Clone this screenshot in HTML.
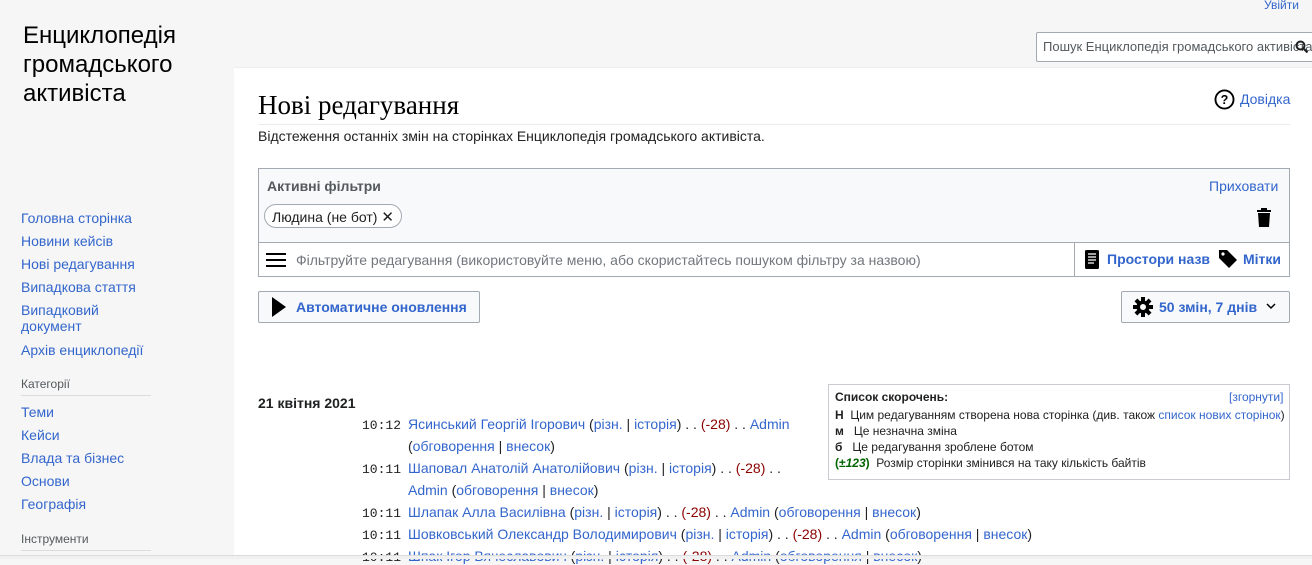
<!DOCTYPE html>
<html><head><meta charset="utf-8"><style>
*{margin:0;padding:0;box-sizing:border-box}
body{width:1312px;height:559px;overflow:hidden;background:#f6f6f6;font-family:"Liberation Sans",sans-serif;color:#202122;position:relative}
a{color:#3366cc;text-decoration:none}
.abs{position:absolute;white-space:nowrap}
.side a{position:absolute;left:21px;font-size:14px;color:#3366cc}
.cat{position:absolute;left:21px;font-size:12px;color:#54595d}
.hr{position:absolute;left:21px;width:130px;height:1px;background:#dcdcdc}
#content{position:absolute;left:234px;top:67px;width:1078px;height:488px;background:#fff;border-top:1px solid #eee}
.mono{font-family:"Liberation Mono",monospace;font-size:13px;color:#202122;display:inline-block;width:46px}
.row{position:absolute;left:362px;font-size:14px;white-space:nowrap}
.red{color:#8b0000}
</style></head><body>
<div class="abs" style="left:23px;top:21px;font-size:24px;line-height:29px;color:#000">Енциклопедія<br>громадського<br>активіста</div>
<a class="abs" style="left:1264px;top:-2px;font-size:12px">Увійти</a>
<div class="abs" style="left:1036px;top:32px;width:290px;height:30px;border:1px solid #a2a9b1;border-radius:2px;background:#fff;font-size:13px;color:#54595d;padding:6px 6px">Пошук Енциклопедія громадського активіста</div>
<svg class="abs" style="left:1295px;top:40px" width="14" height="14" viewBox="0 0 14 14"><circle cx="5.5" cy="5.5" r="4" fill="none" stroke="#202122" stroke-width="2"/><path d="M8.5 8.5l4 4" stroke="#202122" stroke-width="2.2"/></svg>

<div class="side">
<a style="top:210px">Головна сторінка</a>
<a style="top:233px">Новини кейсів</a>
<a style="top:256px">Нові редагування</a>
<a style="top:279px">Випадкова стаття</a>
<a style="top:302px;line-height:16px">Випадковий<br>документ</a>
<a style="top:342px">Архів енциклопедії</a>
<div class="cat" style="top:377px">Категорії</div>
<div class="hr" style="top:395px"></div>
<a style="top:404px">Теми</a>
<a style="top:427px">Кейси</a>
<a style="top:450px">Влада та бізнес</a>
<a style="top:473px">Основи</a>
<a style="top:496px">Географія</a>
<div class="cat" style="top:532px">Інструменти</div>
<div class="hr" style="top:550px"></div>
</div>

<div id="content"></div>
<div class="abs" style="left:258px;top:90px;font-family:'Liberation Serif',serif;font-size:27px;color:#000">Нові редагування</div>
<div class="abs" style="left:258px;top:124px;width:1032px;height:1px;background:#eaecf0"></div>
<svg class="abs" style="left:1214px;top:89px" width="21" height="21" viewBox="0 0 20 20"><circle cx="10" cy="10" r="8.6" fill="none" stroke="#000" stroke-width="1.8"/><text x="10" y="14.5" font-size="12" font-weight="bold" text-anchor="middle" font-family="Liberation Sans" fill="#000">?</text></svg>
<a class="abs" style="left:1240px;top:91px;font-size:14px">Довідка</a>
<div class="abs" style="left:258px;top:128px;font-size:14px">Відстеження останніх змін на сторінках Енциклопедія громадського активіста.</div>

<div class="abs" style="left:258px;top:168px;width:1032px;height:109px;border:1px solid #a2a9b1;background:#f8f9fa"></div>
<div class="abs" style="left:258px;top:242px;width:1032px;height:35px;border:1px solid #a2a9b1;background:#fff"></div>
<div class="abs" style="left:1074px;top:242px;width:1px;height:35px;background:#a2a9b1"></div>
<div class="abs" style="left:267px;top:178px;font-size:14px;font-weight:bold;color:#54595d">Активні фільтри</div>
<a class="abs" style="left:1209px;top:178px;font-size:14px">Приховати</a>
<div class="abs" style="left:264px;top:204px;height:24px;padding:3px 7px;border:1px solid #a2a9b1;border-radius:12px;background:#fff;font-size:14px">Людина (не бот) <span style="font-size:15px">✕</span></div>
<svg class="abs" style="left:1256px;top:208px" width="16" height="19" viewBox="0 0 16 19"><rect x="5" y="0" width="6" height="2" fill="#000"/><rect x="1" y="2" width="14" height="2" fill="#000"/><path d="M2 5h12l-1 14H3z" fill="#000"/></svg>
<svg class="abs" style="left:266px;top:252px" width="20" height="16" viewBox="0 0 20 16"><path d="M0 2h20M0 8h20M0 14h20" stroke="#000" stroke-width="2"/></svg>
<div class="abs" style="left:296px;top:252px;font-size:14px;color:#72777d">Фільтруйте редагування (використовуйте меню, або скористайтесь пошуком фільтру за назвою)</div>
<svg class="abs" style="left:1085px;top:250px" width="14" height="19" viewBox="0 0 14 19"><rect x="0" y="0" width="14" height="19" rx="1.5" fill="#000"/><path d="M3 4h8M3 7h8M3 10h8M3 13h6" stroke="#fff" stroke-width="1.3"/></svg>
<a class="abs" style="left:1107px;top:251px;font-size:14px;font-weight:bold">Простори назв</a>
<svg class="abs" style="left:1218px;top:249px" width="20" height="20" viewBox="0 0 20 20"><path d="M1 1h8l10 10-8 8L1 9z" fill="#000"/><circle cx="5" cy="5" r="1.6" fill="#fff"/></svg>
<a class="abs" style="left:1243px;top:251px;font-size:14px;font-weight:bold">Мітки</a>

<div class="abs" style="left:258px;top:291px;width:222px;height:32px;border:1px solid #a2a9b1;border-radius:2px;background:#f8f9fa"></div>
<svg class="abs" style="left:271px;top:297px" width="16" height="20" viewBox="0 0 16 20"><path d="M1 0l14 10L1 20z" fill="#000"/></svg>
<a class="abs" style="left:296px;top:299px;font-size:14px;font-weight:bold">Автоматичне оновлення</a>
<div class="abs" style="left:1121px;top:291px;width:169px;height:32px;border:1px solid #a2a9b1;border-radius:2px;background:#f8f9fa"></div>
<svg class="abs" style="left:1133px;top:297px" width="20" height="20" viewBox="0 0 20 20"><g fill="#000"><circle cx="10" cy="10" r="6.5"/><rect x="8" y="0" width="4" height="20"/><rect x="0" y="8" width="20" height="4"/><rect x="8" y="0" width="4" height="20" transform="rotate(45 10 10)"/><rect x="8" y="0" width="4" height="20" transform="rotate(-45 10 10)"/></g><circle cx="10" cy="10" r="3" fill="#f8f9fa"/></svg>
<a class="abs" style="left:1159px;top:299px;font-size:14px;font-weight:bold">50 змін, 7 днів</a>
<svg class="abs" style="left:1266px;top:303px" width="10" height="7" viewBox="0 0 10 7"><path d="M1 1l4 4 4-4" fill="none" stroke="#000" stroke-width="1.5"/></svg>

<div class="abs" style="left:828px;top:384px;width:462px;height:96px;border:1px solid #c8ccd1;background:#fff"></div>
<div class="abs" style="left:835px;top:390px;font-size:12px;font-weight:bold">Список скорочень:</div>
<a class="abs" style="left:1229px;top:390px;font-size:12px">[згорнути]</a>
<div class="abs" style="left:835px;top:407px;font-size:12px;line-height:16px"><b>Н</b>&nbsp;&nbsp;Цим редагуванням створена нова сторінка (див. також <a>список нових сторінок</a>)<br><b>м</b>&nbsp;&nbsp;&nbsp;Це незначна зміна<br><b>б</b>&nbsp;&nbsp;&nbsp;Це редагування зроблене ботом<br><span style="color:#006400;font-weight:bold">(±<i>123</i>)</span>&nbsp;&nbsp;Розмір сторінки змінився на таку кількість байтів</div>

<div class="abs" style="left:258px;top:395px;font-size:14px;font-weight:bold">21 квітня 2021</div>
<div class="row" style="top:416px"><span class="mono">10:12</span><a>Ясинський Георгій Ігорович</a> (<a>різн.</a> | <a>історія</a>) . . <span class="red">(-28)</span> . . <a>Admin</a></div>
<div class="row" style="top:438px;left:408px">(<a>обговорення</a> | <a>внесок</a>)</div>
<div class="row" style="top:460px"><span class="mono">10:11</span><a>Шаповал Анатолій Анатолійович</a> (<a>різн.</a> | <a>історія</a>) . . <span class="red">(-28)</span> . .</div>
<div class="row" style="top:482px;left:408px"><a>Admin</a> (<a>обговорення</a> | <a>внесок</a>)</div>
<div class="row" style="top:504px"><span class="mono">10:11</span><a>Шлапак Алла Василівна</a> (<a>різн.</a> | <a>історія</a>) . . <span class="red">(-28)</span> . . <a>Admin</a> (<a>обговорення</a> | <a>внесок</a>)</div>
<div class="row" style="top:526px"><span class="mono">10:11</span><a>Шовковський Олександр Володимирович</a> (<a>різн.</a> | <a>історія</a>) . . <span class="red">(-28)</span> . . <a>Admin</a> (<a>обговорення</a> | <a>внесок</a>)</div>
<div class="row" style="top:548px"><span class="mono">10:11</span><a>Шпак Ігор Вячеславович</a> (<a>різн.</a> | <a>історія</a>) . . <span class="red">(-28)</span> . . <a>Admin</a> (<a>обговорення</a> | <a>внесок</a>)</div>
<div class="abs" style="left:0;top:555px;width:1312px;height:4px;background:#f0f0f0;border-top:1px solid #dcdcdc"></div>
</body></html>
